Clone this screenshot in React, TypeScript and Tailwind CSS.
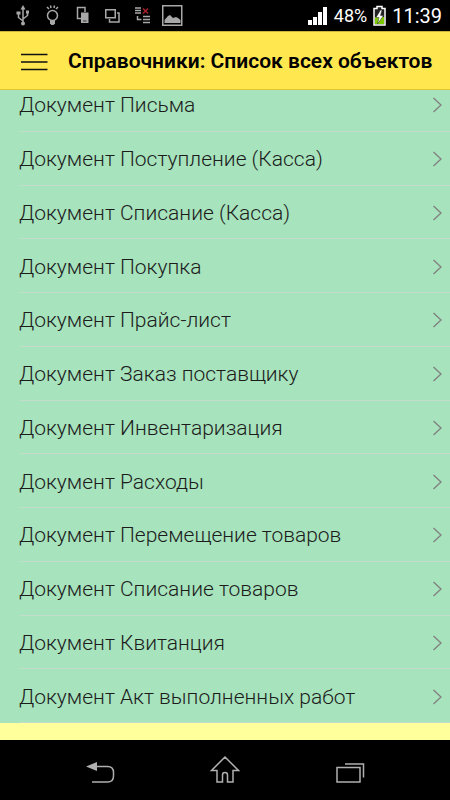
import type { ReactNode } from 'react'

const documents = [
  'Документ Письма',
  'Документ Поступление (Касса)',
  'Документ Списание (Касса)',
  'Документ Покупка',
  'Документ Прайс-лист',
  'Документ Заказ поставщику',
  'Документ Инвентаризация',
  'Документ Расходы',
  'Документ Перемещение товаров',
  'Документ Списание товаров',
  'Документ Квитанция',
  'Документ Акт выполненных работ',
]

function StatusIcon({ children }: { children: ReactNode }) {
  return (
    <svg className="h-[31px] w-[30px] shrink-0" viewBox="0 0 30 31" fill="none" stroke="#a8a8a8" aria-hidden="true">
      {children}
    </svg>
  )
}

function Notifications() {
  return (
    <div className="flex">
      {/* USB */}
      <StatusIcon>
        <path d="M15 9v14M15 21l-4.5-3.5V13M15 19l4.5-3.5V12" strokeWidth="1.5" />
        <path d="M15 5l2.5 4.5h-5zM8.5 11.5h4v3h-4zM18 10.5h3v3h-3z" fill="#a8a8a8" stroke="none" />
        <circle cx="15" cy="23.5" r="2" fill="#a8a8a8" stroke="none" />
      </StatusIcon>
      {/* Light bulb */}
      <StatusIcon>
        <circle cx="14.5" cy="15.5" r="5" strokeWidth="1.5" />
        <path d="M12 20h5v3.5l-1.5 1.5h-2L12 23.5z" fill="#a8a8a8" stroke="none" />
        <path d="M9 7l2 2M12.5 5.5l.5 2.5M16.5 5.5L16 8M20 7l-2 2" strokeWidth="1.5" />
      </StatusIcon>
      {/* Linked devices */}
      <StatusIcon>
        <path d="M13 18.5H9.5v-11H17V12" strokeWidth="1.5" />
        <path d="M13 12.5h7.5V23H13z" fill="#a8a8a8" stroke="none" />
        <path d="M15 21h3.5" stroke="#333" />
      </StatusIcon>
      {/* Windows */}
      <StatusIcon>
        <path d="M7.75 9.75h9.5v8h-9.5zM19 13h2v9h-9.5v-3" strokeWidth="1.5" />
      </StatusIcon>
      {/* Failed transfer */}
      <StatusIcon>
        <path d="M7 8h6M7 10.5h6M7 13h6M9.5 16v3.5h4M15 16.5h7M15 19.5h7M15 22.5h7" strokeWidth="1.5" />
        <path d="M15 8.5l5 5M20 8.5l-5 5" stroke="#a8202a" strokeWidth="1.5" />
      </StatusIcon>
      {/* Picture */}
      <StatusIcon>
        <path d="M4.75 5.75h19v19.5h-19z" strokeWidth="1.5" />
        <path d="M6.5 23v-3l3.5-4 2-1 3 3 3-1 2 1 2.5 2v3z" fill="#a8a8a8" stroke="none" />
      </StatusIcon>
    </div>
  )
}

function StatusBar() {
  return (
    <div className="flex h-[31px] shrink-0 items-center justify-between bg-black px-2 text-white">
      <Notifications />
      <div className="flex items-center">
        <svg className="mr-1.5 h-[31px] w-5" viewBox="0 0 20 31" fill="white" aria-hidden="true">
          <path d="M0 20h4v5H0zM5 17h4v8H5zM10 12h4v13h-4zM15 7h4v18h-4z" />
        </svg>
        <span className="text-lg">48%</span>
        <svg className="mx-1.5 h-[31px] w-[13px]" viewBox="0 0 13 31" aria-hidden="true">
          <path d="M4 6.5h5v2h3V25H1V8.5h3z" fill="#222" stroke="white" strokeWidth="1.5" />
          <path d="M2 17h9v7H2z" fill="#7fc900" />
          <path d="M7.5 10L3 17.5h3L4.5 24l6-8.5h-3L9 10z" fill="white" stroke="#222" strokeWidth="0.5" />
        </svg>
        <span className="text-xl">11:39</span>
      </div>
    </div>
  )
}

function Header() {
  return (
    <header className="relative z-10 flex h-[59px] shrink-0 items-center gap-5 border-y border-t-[#c9b43c] border-b-[#e0c52e] bg-[#fee74f] px-5 pt-0.5">
      <button type="button" aria-label="Меню" className="flex h-10 w-7 shrink-0 items-center">
        <svg className="h-[18px] w-7" viewBox="0 0 28 18" stroke="#111" strokeWidth="1.3" aria-hidden="true">
          <path d="M1 1.5h26.5M1 9h26.5M1 16.5h26.5" />
        </svg>
      </button>
      <h1 className="text-[21px] font-semibold whitespace-nowrap text-black">Справочники: Список всех объектов</h1>
    </header>
  )
}

function DocumentList() {
  return (
    <ul className="-mt-3 flex flex-1 flex-col bg-[#a7e3bc] pl-5">
      {documents.map((name) => (
        <li key={name} className="flex min-h-12 flex-1 border-b border-[#c3dccb]">
          <a href="#" className="-ml-px flex flex-1 items-center justify-between pt-0.5 pr-2">
            <span className="text-[21px] leading-6 font-[350] text-[#1c1c1c]">{name}</span>
            <svg className="h-4 w-[9px] shrink-0" viewBox="0 0 9 16" fill="none" stroke="#808080" strokeWidth="1.3" aria-hidden="true">
              <path d="M.5 1L8 8 .5 15" />
            </svg>
          </a>
        </li>
      ))}
    </ul>
  )
}

function NavigationBar() {
  return (
    <nav className="flex h-[60px] shrink-0 items-center justify-center gap-[93px] bg-black">
      <button type="button" aria-label="Назад">
        <svg className="h-8 w-8" viewBox="0 0 32 32" fill="none" stroke="#b0b0b0" strokeWidth="1.5" aria-hidden="true">
          <path d="M13 12.5h10.5q6 0 6 6V22q0 6-6 6H8" />
          <path d="M2 12.5L13 8v9z" fill="#b0b0b0" stroke="none" />
        </svg>
      </button>
      <button type="button" aria-label="Домой">
        <svg className="h-8 w-8" viewBox="0 0 32 32" fill="none" stroke="#b0b0b0" strokeWidth="1.5" aria-hidden="true">
          <path d="M16 3L2.5 16.5H8V28h5.5v-7q0-2.500 2.500-2.500t2.500 2.500v7H24V16.500h5.500z" />
        </svg>
      </button>
      <button type="button" aria-label="Недавние">
        <svg className="h-8 w-8" viewBox="0 0 32 32" fill="none" stroke="#b0b0b0" strokeWidth="1.5" aria-hidden="true">
          <path d="M3 13.5h23V28H3zM11 10h18.5v13.5" />
        </svg>
      </button>
    </nav>
  )
}

export default function App() {
  return (
    <div className="flex min-h-screen flex-col bg-[#ffff9b] font-[Roboto,sans-serif]">
      <StatusBar />
      <Header />
      <main className="flex flex-1 flex-col pb-[17px]">
        <DocumentList />
      </main>
      <NavigationBar />
    </div>
  )
}
